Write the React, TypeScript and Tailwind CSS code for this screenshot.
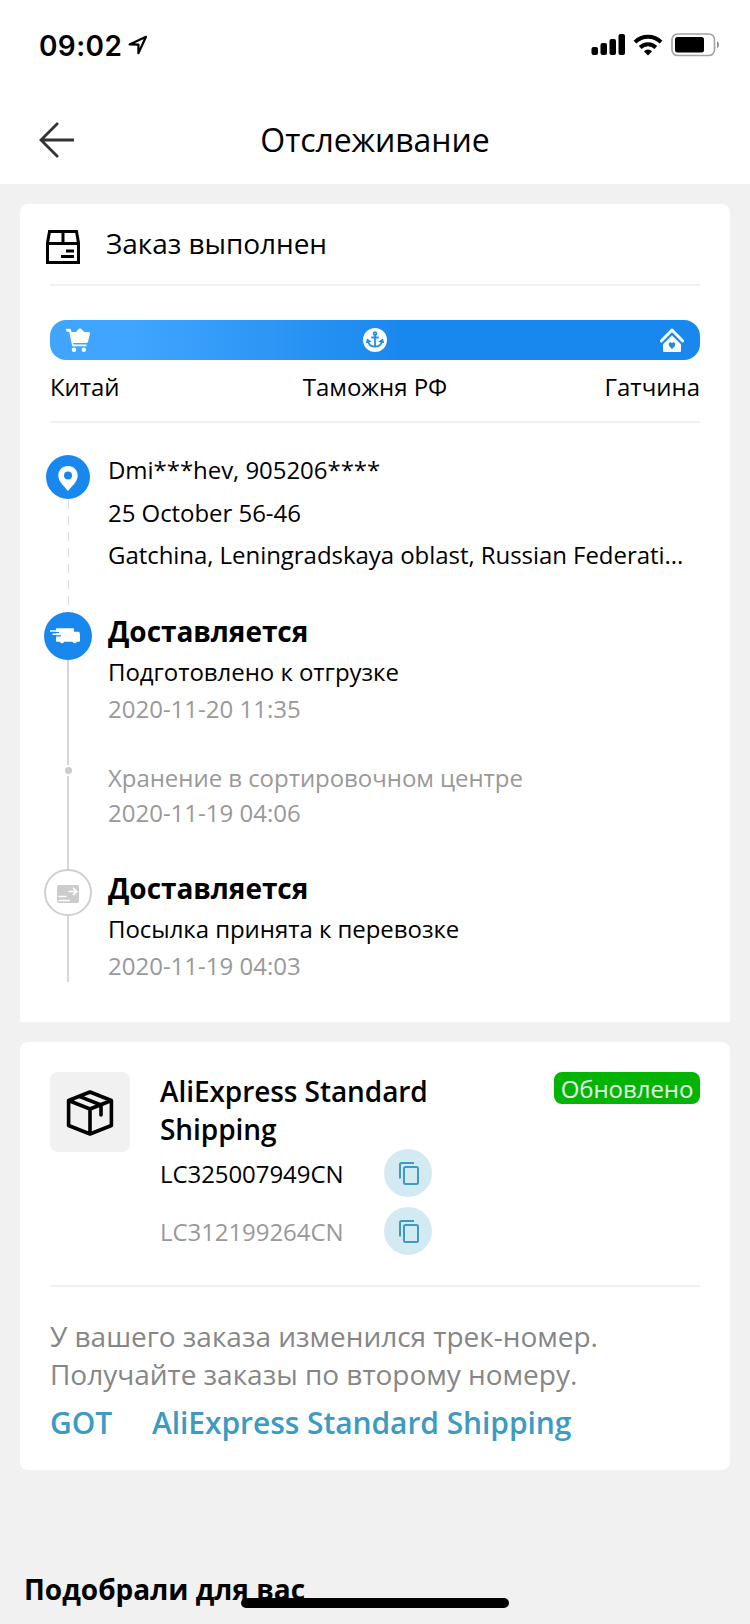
import React from 'react';
import clsx from 'clsx';

const StatusBar = () => (
  <div className="flex h-[90px] items-center justify-between pl-[39px] pr-[29px]">
    <div className="flex items-center font-['Inter',sans-serif]">
      <span className="pt-px text-[28px] leading-9 font-semibold tracking-[0.4px]">09:02</span>
      <svg width="20" height="20" viewBox="0 0 20 20" className="ml-1.5">
        <path d="M1.6 9.4 18 1.8 10.4 18.2V9.6z" fill="none" stroke="#000" strokeWidth="2.2" strokeLinejoin="round" />
      </svg>
    </div>
    <div className="flex items-center">
      <svg width="35" height="22" viewBox="0 0 35 22">
        <rect x="0.5" y="13" width="6.5" height="8" rx="2" />
        <rect x="9.5" y="9" width="6.5" height="12" rx="2" />
        <rect x="18.5" y="5" width="6.5" height="16" rx="2" />
        <rect x="27.5" y="0" width="6.5" height="21" rx="2" />
      </svg>
      <svg width="30" height="22" viewBox="0 0 30 22" className="ml-[7px]" fill="none" stroke="#000" strokeWidth="4">
        <path d="M2 8.2a18.4 18.4 0 0 1 26 0" />
        <path d="M7.2 13.5a11 11 0 0 1 15.6 0" />
        <path d="M15 21.4l-4-4.2a5.6 5.6 0 0 1 8 0z" fill="#000" stroke="none" />
      </svg>
      <svg width="50" height="24" viewBox="0 0 50 24" className="ml-2">
        <rect x="1" y="1" width="42.5" height="21.5" rx="5.5" fill="none" stroke="#a3a3a3" strokeWidth="1.6" />
        <rect x="4" y="4" width="29" height="15.5" rx="2.5" />
        <path d="M46 8.3c2.6 1 2.6 5.8 0 6.9z" fill="#8f8f8f" />
      </svg>
    </div>
  </div>
);

const Header = () => (
  <header className="grid h-[94px] grid-cols-[80px_1fr_80px] items-center">
    <svg width="36" height="38" viewBox="0 0 36 38" className="ml-[39px]" fill="none" stroke="#333" strokeWidth="2.8">
      <path d="M19 2 2 19 19 36M2 19h33" />
    </svg>
    <h1 className="text-center text-[32px] leading-[100px] tracking-[-0.07px]">Отслеживание</h1>
  </header>
);

const ProgressBar = () => (
  <div className="flex h-10 items-center justify-between rounded-2xl bg-linear-to-r from-[#3fa5fe] from-12% to-[#1988ee] to-54% px-4">
    <svg width="24" height="24" viewBox="0 0 24 24" fill="#fff">
      <path d="M0 1.5C0 1 .5.7 1 .7h2.4c.9 0 1.3.5 1.6 1.3L5.6 4h5c0-.8.5-1.5 1.2-1.9.4-2.2 3.9-2.2 4.3 0 1 .4 1.7 1.1 1.8 1.9h5c.9 0 1.3.6 1.1 1.4l-1.9 8.200c-.3 1-.8 1.400-1.700 1.400H7l.5 1.400h13v1.800H6.300L3.200 3.700H1.300C.5 3.500 0 2.400 0 1.500z" />
      <circle cx="8" cy="21.700" r="2.200" />
      <circle cx="17.800" cy="21.700" r="2.200" />
    </svg>
    <svg width="24" height="24" viewBox="0 0 24 24">
      <circle cx="12" cy="12" r="12" fill="#fff" />
      <g fill="none" stroke="#1f8eee" strokeWidth="1.8">
        <circle cx="12" cy="5.600" r="1.400" />
        <path d="M12 7v12M8.300 9.500h7.400M5 13.500c1 3.600 3.700 5.200 7 5.200s6-1.600 7-5.200" />
      </g>
      <path d="M2.800 15.300l1.200-4.800 4.800 3.200zM21.200 15.300l-1.200-4.800-4.800 3.200z" fill="#1f8eee" />
    </svg>
    <svg width="24" height="24" viewBox="0 0 24 24">
      <path d="M1.500 12.800 12 2l10.500 10.800" fill="none" stroke="#fff" strokeWidth="3" strokeLinejoin="round" strokeLinecap="round" />
      <path d="M12 7.200 21 16.200V23a1 1 0 0 1-1 1H4a1 1 0 0 1-1-1v-6.800z" fill="#fff" />
      <path d="M12 21c-2-1.800-3.300-3-3.300-4.700 0-2.400 2.600-2.700 3.300-1 .7-1.700 3.300-1.400 3.300 1 0 1.700-1.300 2.900-3.300 4.700z" fill="#2c87d8" />
    </svg>
  </div>
);

interface TimelineRowProps {
  marker: React.ReactNode;
  className: string;
  dashed?: boolean;
  children: React.ReactNode;
}

const TimelineRow: React.FC<TimelineRowProps> = ({ marker, className, dashed, children }) => (
  <div className={clsx('flex', className)}>
    <div className="flex w-12 shrink-0 flex-col items-center">
      {marker}
      {dashed ? (
        <svg width="2" height="113" viewBox="0 0 2 113">
          <path d="M1.5 1v112" stroke="#dcdcdc" strokeWidth="1" strokeDasharray="9 7" />
        </svg>
      ) : (
        <div className="w-0.5 flex-1 bg-[#d6d6d6]" />
      )}
    </div>
    <div className="ml-4 min-w-0 flex-1 text-2xl tracking-[-0.05px]">{children}</div>
  </div>
);

const Timeline = () => (
  <div className="-ml-1.5 mt-8">
    {/* Dirección */}
    <TimelineRow
      className="h-[157px]"
      dashed
      marker={
        <div className="flex size-11 items-center justify-center rounded-full bg-[#1988ee]">
          <svg width="20" height="25" viewBox="0 0 20 25" className="mt-0.5">
            <path
              fillRule="evenodd"
              d="M10 0C4.3 0 .3 4.2.3 9.500.3 15.500 6 20 10 25c4-5 9.700-9.500 9.700-15.500C19.700 4.200 15.700 0 10 0zm0 5.500a4 4 0 1 1 0 8 4 4 0 0 1 0-8z"
              fill="#fff"
            />
          </svg>
        </div>
      }
    >
      <div className="flex flex-col gap-[14.5px] pt-px leading-7">
        <p>Dmi***hev, 905206****</p>
        <p>25 October 56-46</p>
        <p className="whitespace-nowrap">Gatchina, Leningradskaya oblast, Russian Federati...</p>
      </div>
    </TimelineRow>

    {/* Estado actual */}
    <TimelineRow
      className="h-[153px]"
      marker={
        <div className="flex size-12 items-center justify-center rounded-full bg-[#1988ee]">
          <svg width="30" height="17" viewBox="0 0 30 17" className="-ml-1.5" fill="#fff">
            <path d="M6 1q0-.8.800-.8h16.400q.8 0 .8.800v2.800h4.500q.9 0 1.100.9l.4 2v6q0 1-1 1h-2.200a2.200 2.200 0 0 1-4.200 0h-8.500a2.200 2.200 0 0 1-4.200 0H7q-1 0-1-1z" />
            <path d="M3 4.500h6M4 7.800h7" stroke="#1988ee" strokeWidth="1.200" />
            <path d="M0 3h8M2.500 6.300h8" stroke="#fff" strokeWidth="1.500" />
          </svg>
        </div>
      }
    >
      <h2 className="text-[28px] leading-[38px] font-bold">Доставляется</h2>
      <p className="mt-[3px] leading-[37px]">Подготовлено к отгрузке</p>
      <p className="leading-[37px] tracking-normal text-[#999]">2020-11-20 11:35</p>
    </TimelineRow>

    <TimelineRow
      className="h-[104px]"
      marker={<div className="my-0.5 size-[7px] rounded-full bg-[#ccc]" />}
    >
      <div className="flex flex-col gap-[9px] leading-[26px] text-[#999]">
        <p>Хранение в сортировочном центре</p>
        <p className="tracking-normal">2020-11-19 04:06</p>
      </div>
    </TimelineRow>

    <TimelineRow
      className="h-[113px]"
      marker={
        <div className="flex h-[47px] w-12 items-center justify-center rounded-full border-2 border-[#d0d0d0]">
          <svg width="22" height="18" viewBox="0 0 22 18" className="mt-0.5">
            <rect width="22" height="18" rx="2" fill="#ccc" />
            <path d="M1.5 11.500h8M1.500 15.500h11.500" stroke="#fff" strokeWidth="1.500" />
            <path d="M11.500 6.500h8M16 2.800l3.700 3.700-3.700 3.700" fill="none" stroke="#fff" strokeWidth="1.700" />
          </svg>
        </div>
      }
    >
      <h2 className="text-[28px] leading-[38px] font-bold">Доставляется</h2>
      <p className="mt-[3px] leading-[37px]">Посылка принята к перевозке</p>
      <p className="leading-[37px] tracking-normal text-[#999]">2020-11-19 04:03</p>
    </TimelineRow>
  </div>
);

const CopyButton = () => (
  <button type="button" className="flex size-12 items-center justify-center rounded-full bg-[#d4eaf2]">
    <svg width="20" height="23" viewBox="0 0 20 23" fill="none" stroke="#3c9bbf" strokeWidth="2" className="ml-px">
      <path d="M1 16.500V2.500Q1 1 2.500 1H15" />
      <rect x="5" y="5" width="14" height="17" rx="1.500" />
    </svg>
  </button>
);

const trackNumbers = [
  { code: 'LC325007949CN', active: true },
  { code: 'LC312199264CN', active: false },
];

const ShippingCard = () => (
  <section className="h-[428px] rounded-lg bg-white px-[30px] pt-[30px]">
    <div className="flex items-start">
      <div className="flex size-20 items-center justify-center rounded-lg bg-[#f1f1f1]">
        <svg width="48" height="46" viewBox="0 0 48 46" className="mt-px" fill="none" stroke="#000" strokeWidth="3.6" strokeLinejoin="round" strokeLinecap="round">
          <path d="M24 2 45.400 10.500V35.500L24 44 2.600 35.500V10.500zM2.600 10.500 24 19l21.400-8.500M24 19v25M13.300 6.300l21.700 8.700v10" />
        </svg>
      </div>
      <div className="ml-[30px] flex-1">
        <h3 className="w-[300px] text-[28px] leading-[38px] font-semibold tracking-[-0.07px]">AliExpress Standard Shipping</h3>
        <div className="mt-px flex flex-col gap-2.5">
          {trackNumbers.map((t) => (
            <div key={t.code} className="flex h-12 items-center">
              <span className={clsx('w-56 pt-0.5 text-2xl tracking-[-0.07px]', t.active ? 'text-black' : 'text-[#999]')}>
                {t.code}
              </span>
              <CopyButton />
            </div>
          ))}
        </div>
      </div>
      <span className="h-8 w-[146px] rounded-lg bg-[#04b404] text-center text-2xl leading-[34px] tracking-[-0.05px] text-white/90">
        Обновлено
      </span>
    </div>

    <div className="mt-[30px] h-0.5 bg-[#f1f1f1]" />

    <p className="mt-[30px] text-[28px] leading-[38px] tracking-[-0.02px] text-[#868686]">
      У вашего заказа изменился трек-номер.
      <br />
      Получайте заказы по второму номеру.
    </p>
    <div className="mt-2.5 flex text-[30px] leading-10 font-semibold tracking-[-0.07px] text-[#3c9bbf]">
      <span className="w-[102px]">GOT</span>
      <span>AliExpress Standard Shipping</span>
    </div>
  </section>
);

export default function App() {
  return (
    <div className="relative h-[1624px] w-[750px] overflow-hidden bg-[#f1f1f1] font-['Open_Sans',sans-serif] text-black">
      <div className="h-[184px] bg-white">
        <StatusBar />
        <Header />
      </div>

      <main className="px-5 pt-5">
        <section className="h-[818px] rounded-t-lg bg-white px-[30px]">
          <div className="flex h-20 items-center">
            <svg width="34" height="34" viewBox="0 0 34 34" className="-ml-1 mt-1.5" fill="none" stroke="#000" strokeWidth="3">
              <path d="M3.500 1.500h27L32.500 13v19.500h-31V13zM1.500 13.500h31M17 1.500v12M20 21h8M15 26.500h13" />
            </svg>
            <span className="-mt-0.5 ml-[26px] text-[28px] leading-[38px] tracking-[-0.05px]">Заказ выполнен</span>
          </div>
          <div className="h-0.5 bg-[#f1f1f1]" />

          <div className="mt-[34px]">
            <ProgressBar />
          </div>
          <div className="mt-[7px] grid h-[54px] grid-cols-3 text-2xl leading-10">
            <span className="tracking-[-0.1px]">Китай</span>
            <span className="text-center">Таможня РФ</span>
            <span className="text-right">Гатчина</span>
          </div>
          <div className="h-0.5 bg-[#f1f1f1]" />

          <Timeline />
        </section>

        <div className="mt-5">
          <ShippingCard />
        </div>

        <h2 className="ml-1 mt-[100px] text-[28px] leading-[38px] font-bold">Подобрали для вас</h2>
      </main>

      {/* Home indicator */}
      <div className="absolute bottom-4 left-[241px] h-2.5 w-[268px] rounded-full bg-black" />
    </div>
  );
}
